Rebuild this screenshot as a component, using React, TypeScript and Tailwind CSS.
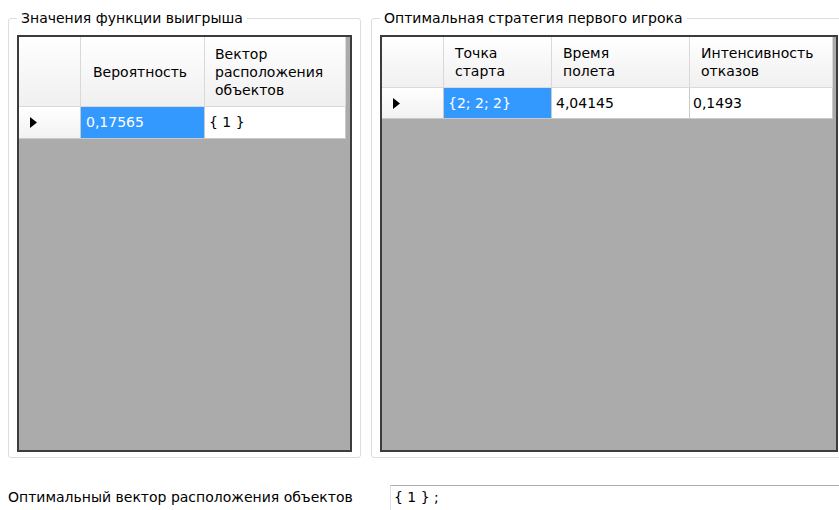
import { ReactNode } from 'react'

type Column = {
  lines: string[]
  width: string
  headPad: string
  value: string
  cellPad: string
  selected?: boolean
}

const payoffColumns: Column[] = [
  { lines: ['Вероятность'], width: 'w-[124px]', headPad: 'pl-[12px]', value: '0,17565', cellPad: 'pl-[5px]', selected: true },
  { lines: ['Вектор', 'расположения', 'объектов'], width: 'w-[141px]', headPad: 'pl-[10px]', value: '{ 1 }', cellPad: 'pl-[4px]' },
]

const strategyColumns: Column[] = [
  { lines: ['Точка', 'старта'], width: 'w-[108px]', headPad: 'pl-[11px]', value: '{2; 2; 2}', cellPad: 'pl-[4px]', selected: true },
  { lines: ['Время', 'полета'], width: 'w-[138px]', headPad: 'pl-[11px]', value: '4,04145', cellPad: 'pl-[4px]' },
  { lines: ['Интенсивность', 'отказов'], width: 'w-[143px]', headPad: 'pl-[11px]', value: '0,1493', cellPad: 'pl-[3px]' },
]

function GroupBox({ title, className, children }: { title: string; className: string; children: ReactNode }) {
  return (
    <fieldset className={`shrink-0 rounded-[3px] border border-[#d5dfe5] px-[8px] pb-[5px] ${className}`}>
      <legend className="px-[4px] leading-[18px]">{title}</legend>
      <div className="pt-[8px]">{children}</div>
    </fieldset>
  )
}

function RowArrow() {
  return (
    <svg width="7" height="11" viewBox="0 0 7 11" className="ml-[11px]">
      <polygon points="0,0 7,5.5 0,11" fill="#000" />
    </svg>
  )
}

// DataGridView look: header row, one data row, then the dark-grey empty area
function DataGrid({ columns, headH, rowH, className }: { columns: Column[]; headH: string; rowH: string; className: string }) {
  return (
    <div className={`flex flex-col border-2 border-[#3c3c3c] bg-[#ababab] ${className}`}>
      <div className={`flex ${headH}`}>
        <div className="w-[62px] shrink-0 border-r border-b border-[#d9d9d9] bg-linear-to-b from-white to-[#f0f0f0]" />
        {columns.map((c) => (
          <div
            key={c.lines[0]}
            className={`flex shrink-0 flex-col justify-center border-r border-b border-[#d9d9d9] bg-linear-to-b from-white to-[#f0f0f0] leading-[18px] ${c.width} ${c.headPad}`}
          >
            {c.lines.map((l) => (
              <span key={l}>{l}</span>
            ))}
          </div>
        ))}
      </div>
      <div className={`flex ${rowH}`}>
        <div className="flex w-[62px] shrink-0 items-center border-r border-b border-[#c9c9c9] bg-linear-to-b from-white to-[#f2f2f2]">
          <RowArrow />
        </div>
        {columns.map((c) => (
          <div
            key={c.value}
            className={`flex shrink-0 items-center border-r border-b border-[#c9c9c9] ${c.width} ${c.cellPad} ${
              c.selected ? 'bg-[#3399ff] text-white' : 'bg-white'
            }`}
          >
            {c.value}
          </div>
        ))}
      </div>
    </div>
  )
}

export default function App() {
  return (
    <div className="relative h-[510px] w-[839px] overflow-hidden bg-white font-['DejaVu_Sans',sans-serif] text-[14px] text-black">
      <div className="flex items-start gap-[10px] pl-[8px] pt-[9px]">
        <GroupBox title="Значения функции выигрыша" className="h-[449px] w-[353px]">
          <DataGrid columns={payoffColumns} headH="h-[70px]" rowH="h-[32px]" className="h-[417px] w-[335px]" />
        </GroupBox>
        <GroupBox title="Оптимальная стратегия первого игрока" className="h-[449px] w-[490px]">
          <DataGrid columns={strategyColumns} headH="h-[51px]" rowH="h-[31px]" className="h-[417px] w-[458px]" />
        </GroupBox>
      </div>

      <div className="mt-[27px] flex items-start pl-[8px]">
        <div className="w-[382px] shrink-0 pt-[3px] leading-[18px]">Оптимальный вектор расположения объектов</div>
        <div className="h-[32px] w-[470px] shrink-0 border border-[#dbdfe6] border-t-[#abadb3] px-[3px] pt-[2px] leading-[18px]">
          {'{ 1 } ;'}
        </div>
      </div>
    </div>
  )
}
